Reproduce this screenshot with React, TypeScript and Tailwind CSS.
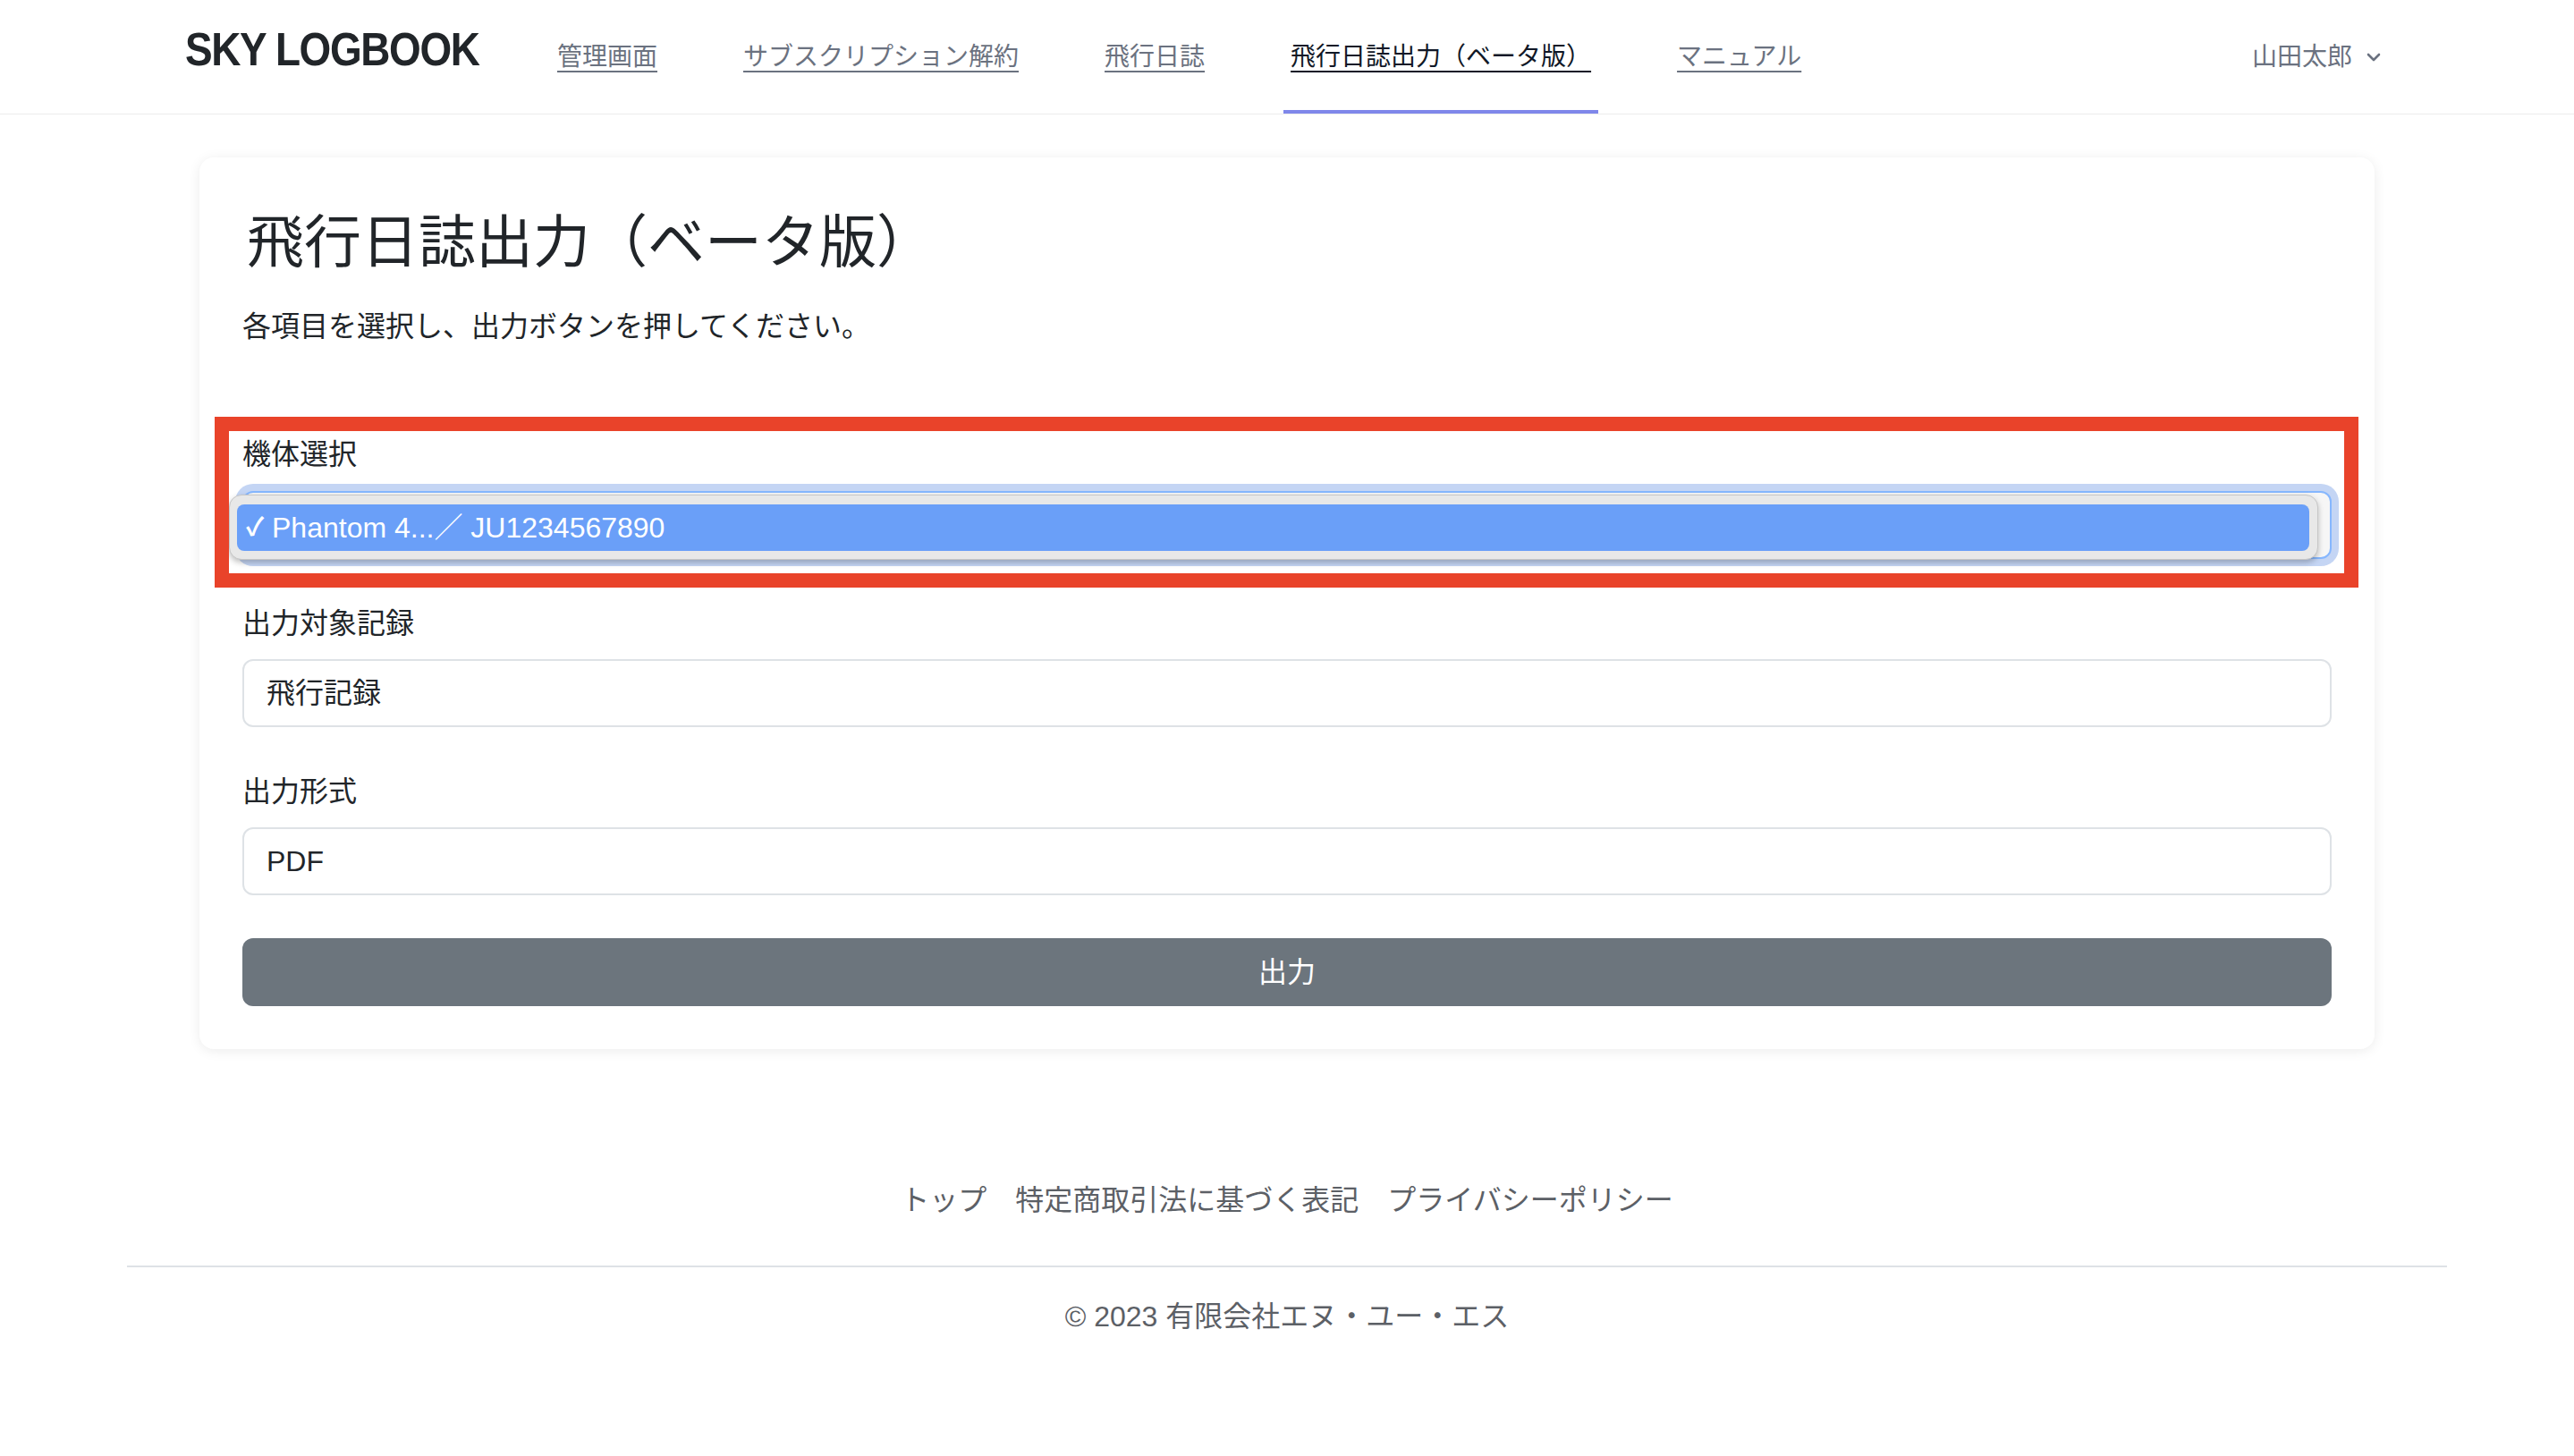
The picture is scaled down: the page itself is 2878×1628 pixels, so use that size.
import React from "react";
import clsx from "clsx";

const navLinks = [
  { label: "管理画面" },
  { label: "サブスクリプション解約" },
  { label: "飛行日誌" },
  { label: "飛行日誌出力（ベータ版）", active: true },
  { label: "マニュアル" },
];

function Header() {
  return (
    <header className="h-[128px] border-b border-[#ececec] bg-white">
      <div className="mx-auto flex h-full max-w-[2560px] items-stretch px-12">
        <div className="flex w-[328px] items-center">
          <span className="mb-[16px] inline-block origin-left scale-x-[0.9] whitespace-nowrap text-[51px] font-bold leading-none tracking-[-1.5px] text-[#212529]">
            SKY LOGBOOK
          </span>
        </div>
        <nav className="ml-[80px] flex items-stretch gap-[80px]">
          {navLinks.map((link) => (
            <a
              key={link.label}
              href="#"
              className={clsx(
                "flex items-center border-b-4 px-2 pt-[4px] text-[28px] underline underline-offset-[6px]",
                link.active
                  ? "border-[#7f87ea] text-[#111827]"
                  : "border-transparent text-[#6b7280]"
              )}
            >
              {link.label}
            </a>
          ))}
        </nav>
        <div className="ml-auto mr-[9px] flex items-center gap-[16px] text-[28px] text-[#6b7280]">
          <span>山田太郎</span>
          <svg width="16" height="10" viewBox="0 0 16 10" fill="none">
            <path d="M2 2l6 6 6-6" stroke="#6b7280" strokeWidth="2.6" strokeLinecap="round" strokeLinejoin="round" />
          </svg>
        </div>
      </div>
    </header>
  );
}

function Field({ label, value }: { label: string; value: string }) {
  return (
    <div className="mt-[48px]">
      <div className="text-[32px] leading-[48px] text-[#212529]">{label}</div>
      <div className="mt-[16px] flex h-[76px] items-center rounded-[12px] border-2 border-[#dee2e6] px-[25px] text-[32px] text-[#212529]">
        {value}
      </div>
    </div>
  );
}

export default function App() {
  return (
    <div className="min-h-screen bg-white font-['Liberation_Sans','Noto_Sans_CJK_JP',sans-serif] text-[#212529]">
      <Header />
      <main className="pt-[48px]">
        <div className="mx-auto w-[2432px] rounded-[16px] bg-white p-[48px] shadow-[0_2px_14px_rgba(0,0,0,0.08)]">
          <h1 className="pl-[5px] pt-[4px] text-[64px] leading-[86px] text-[#212529]">飛行日誌出力（ベータ版）</h1>
          <p className="mt-[27px] text-[32px] leading-[48px]">各項目を選択し、出力ボタンを押してください。</p>

          {/* 機体選択: open dropdown + red annotation */}
          <div className="relative mt-[95px]">
            <div className="text-[32px] leading-[48px]">機体選択</div>
            <div className="relative mt-[17px] h-[76px] rounded-[12px] border-2 border-[#86b7fe] bg-[#f6f6f6] shadow-[0_0_0_8px_#c4d5f4]">
              <div className="absolute -left-[17px] right-[13px] top-[2px] h-[73px] rounded-[14px] border border-[#c6c6c6] bg-[#e8e8e8] py-[10px] pl-[8px] pr-[9px] shadow-[0_3px_6px_rgba(0,0,0,0.25)]">
                <div className="flex h-[52px] items-center rounded-[8px] bg-[#6a9ff8] pl-[10px] text-[32px] text-white">
                  <span className="w-[29px] text-[28px] font-bold">✓</span>
                  <span>Phantom 4...／ JU1234567890</span>
                </div>
              </div>
            </div>
            <div className="pointer-events-none absolute -bottom-[32px] -left-[31px] -right-[30px] -top-[18px] border-[16px] border-[#e9432a]" />
          </div>

          <Field label="出力対象記録" value="飛行記録" />
          <Field label="出力形式" value="PDF" />

          <button className="mt-[48px] flex h-[76px] w-full items-center justify-center rounded-[12px] bg-[#6c757d] text-[32px] text-white">
            出力
          </button>
        </div>
      </main>

      <footer className="mx-auto mt-[145px] w-[2594px]">
        <div className="flex justify-center text-[32px] leading-[48px] text-[#5c6066]">
          <a href="#" className="px-[16px]">トップ</a>
          <a href="#" className="px-[16px]">特定商取引法に基づく表記</a>
          <a href="#" className="px-[16px]">プライバシーポリシー</a>
        </div>
        <div className="mt-[49px] border-t-2 border-[#dee2e6]" />
        <p className="mt-[31px] text-center text-[32px] leading-[48px] text-[#5c6066]">© 2023 有限会社エヌ・ユー・エス</p>
      </footer>
    </div>
  );
}
